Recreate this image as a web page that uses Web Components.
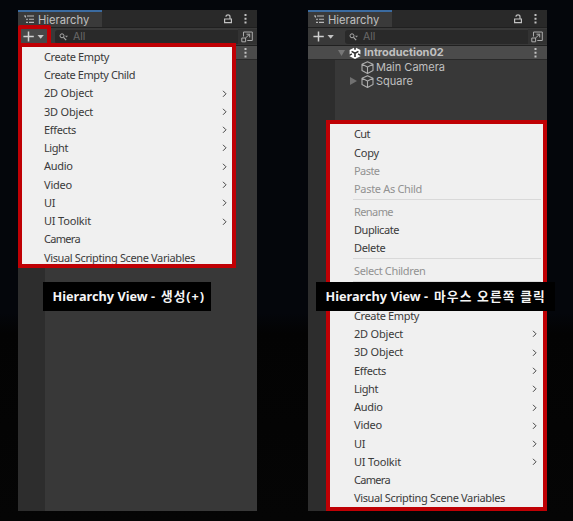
<!DOCTYPE html>
<html lang="ko"><head><meta charset="utf-8"><title>Hierarchy View</title>
<style>
body{margin:0;width:573px;height:521px;overflow:hidden;background:linear-gradient(#04060b 0 60%,#030303 64%,#050505);font-family:"Noto Sans","Noto Sans CJK KR",sans-serif}
main{display:flex;gap:51.5px;padding:10px 0 0 18px}
</style></head><body>
<main>
<hierarchy-panel>
  <menu-box slot="overlay" style="left:0;top:33px;width:218px;height:225px;--pad:22px;--arrow:5.5px;--top:1px">
    <menu-row w="65">Create Empty</menu-row><menu-row w="91">Create Empty Child</menu-row>
    <menu-row w="49" sub>2D Object</menu-row><menu-row w="49" sub>3D Object</menu-row><menu-row w="32" sub>Effects</menu-row><menu-row w="24" sub>Light</menu-row><menu-row w="28.5" sub>Audio</menu-row><menu-row w="28" sub>Video</menu-row><menu-row w="11" sub>UI</menu-row><menu-row w="47" sub>UI Toolkit</menu-row><menu-row w="36">Camera</menu-row><menu-row w="151">Visual Scripting Scene Variables</menu-row>
  </menu-box>
  <focus-frame slot="overlay"></focus-frame>
  <caption-bar slot="overlay" style="left:25px;width:167.5px"><fit-text w="102.5">Hierarchy View -</fit-text><fit-text w="44">생성(+)</fit-text></caption-bar>
</hierarchy-panel>
<hierarchy-panel tree>
  <menu-box slot="overlay" style="left:18px;top:110px;width:220.5px;height:390.5px;--pad:24px;--arrow:6px;--top:1.5px">
    <menu-row w="16">Cut</menu-row><menu-row w="25">Copy</menu-row><menu-row w="25.5" off>Paste</menu-row><menu-row w="68" off>Paste As Child</menu-row><menu-line></menu-line>
    <menu-row w="39" off>Rename</menu-row><menu-row w="45">Duplicate</menu-row><menu-row w="31.5">Delete</menu-row><menu-line></menu-line>
    <menu-row w="71.5" off>Select Children</menu-row><menu-line></menu-line><menu-row></menu-row><menu-line></menu-line>
    <menu-row w="65">Create Empty</menu-row><menu-row w="49" sub>2D Object</menu-row><menu-row w="49" sub>3D Object</menu-row><menu-row w="32" sub>Effects</menu-row><menu-row w="24" sub>Light</menu-row><menu-row w="28.5" sub>Audio</menu-row><menu-row w="28" sub>Video</menu-row><menu-row w="11" sub>UI</menu-row><menu-row w="47" sub>UI Toolkit</menu-row><menu-row w="36">Camera</menu-row><menu-row w="151">Visual Scripting Scene Variables</menu-row>
  </menu-box>
  <caption-bar slot="overlay" style="left:8px;width:239px"><fit-text w="102.5">Hierarchy View -</fit-text><fit-text w="112">마우스 오른쪽 클릭</fit-text></caption-bar>
</hierarchy-panel>
</main>
<script>
// Spreads the leftover width of a label over its characters.
function fit(el, text, width){
  const n=[...text.trim()].length;
  if(!n||!width) return;
  el.style.letterSpacing='0px';
  el.style.letterSpacing=((width-el.getBoundingClientRect().width)/n)+'px';
}
class Base extends HTMLElement{
  constructor(){super();this.attachShadow({mode:'open'}).innerHTML=this.view()}
  view(){return ''}
}
customElements.define('kebab-dots',class extends Base{view(){return `<style>
:host{display:block;width:3px;height:10px}svg{display:block}</style><svg width="3" height="10"><path d="M.5 0h2v2h-2zM.5 3.8h2v2h-2zM.5 7.6h2v2h-2z" fill="#c2c2c2"/></svg>`}});
const cube='<svg width="13" height="13" viewBox="0 0 13 13" fill="none" stroke="#adadad" stroke-width="1.1" stroke-linejoin="round"><path d="M6.5.7 12 3.3v6.3l-5.5 2.8L1 9.6V3.3zM1 3.3l5.5 2.8L12 3.3M6.5 6.1v6.3"/></svg>';
customElements.define('hierarchy-panel',class extends Base{view(){return `<style>
:host{display:flex;flex-direction:column;position:relative;width:238.5px;height:501px;background:linear-gradient(90deg,#2d2d2d 27px,#383838 27px);font:12px/14px Inter,Roboto,sans-serif;color:#c0c0c0}
svg{display:block;flex:none}
.tabs{height:17px;display:flex;align-items:center;background:#292929;border-bottom:1px solid #202020;padding-right:10px;flex:none}
.tab{box-sizing:border-box;width:84px;height:17px;border-top:2px solid #3b6ba0;background:#3a3a3a;display:flex;align-items:center;gap:4px;padding-left:6px;font-size:11.2px}
.grow{flex:1}
.bar{height:17px;display:flex;align-items:center;background:#393939;border-bottom:1px solid #202020;padding-left:5px;flex:none}
.search{flex:1;height:14px;margin-left:11px;background:#292929;border-radius:3px 0 0 3px;display:flex;align-items:center;gap:5px;padding-left:4px;font-size:10.5px;color:#696969}
.pick{width:19px;height:15px;display:flex;align-items:center;justify-content:center;background:#323232}
.scene{height:13px;background:#4b4b4b;border-bottom:1px solid #292929;display:flex;align-items:center;padding:0 9.5px 0 30px;flex:none;font-weight:700;font-size:11px;letter-spacing:-.03px}
.scene>span{position:relative;top:-1px}
.scene>span,.row>span{white-space:nowrap}
.row{height:14px;display:flex;align-items:center;gap:2.5px;padding-left:52.5px;font-size:11px;letter-spacing:0}
.row svg{position:relative;top:.5px}
.row.kid{padding-left:42px}
.tree{display:none;flex-direction:column;margin-top:-.2px} :host([tree]) .tree{display:flex}
:host(:not([tree])) .hide{visibility:hidden}
</style>
<div class="tabs"><div class="tab"><svg width="10" height="9" viewBox="0 0 10 9"><path d="M0 1h2M3 1h7M2 4.2h2M5 4.2h5M2 7.4h2M5 7.4h5M1.5 1v1.5" stroke="#b9b9b9" stroke-width="1.1"/></svg><span>Hierarchy</span></div><i class="grow"></i>
<svg width="8" height="10" viewBox="0 0 8 10" style="margin-right:12px" fill="none" stroke="#c2c2c2"><path d="M.6 5h6.8v3.7H.6z" stroke-width="1.2"/><path d="M2 2.7C2 .2 6 .2 6 2.7V5" stroke-width="1.2"/></svg><kebab-dots></kebab-dots></div>
<div class="bar"><svg width="21" height="11" viewBox="0 0 21 11"><path d="M5.5.5v10M.4 5.5h10.4" stroke="#cecece" stroke-width="1.5"/><path d="M14.5 4h6.3l-3.1 3.8z" fill="#c4c4c4"/></svg>
<div class="search"><svg width="9" height="8" viewBox="0 0 9 8"><circle cx="3" cy="2.8" r="2" fill="none" stroke="#aaa"/><path d="m4.5 4.3 2.7 2.9" stroke="#aaa" stroke-width="1.2"/><path d="M6 2.8h3L7.5 4.5z" fill="#999"/></svg><span>All</span></div>
<div class="pick"><svg width="12" height="12" viewBox="0 0 12 12" fill="none" stroke="#ababab"><path d="M2.5 5.5V1h8.8v8.5H6.3"/><path d="M.8 7h3.8v3.8H.8z"/><path d="M4.3 7.2 8.5 3.3M5.5 3.2h3.2v3.2"/></svg></div></div>
<div class="scene"><svg class="hide" width="7" height="6"><path d="M0 0h7L3.5 6z" fill="#777"/></svg>
<svg class="hide" width="12" height="12" viewBox="0 0 12 12" style="margin:0 3px 0 4px"><path d="M6 .2 11.4 3v6.2L6 11.9.6 9.2V3z" fill="#fff"/><path d="M6 6.2V10M6 6.2 2.6 4.4M6 6.2l3.4-1.8M6 0v2.8M.3 8.4l2.6-1.5M11.7 8.4 9.1 6.9" stroke="#303030" stroke-width="1.6"/></svg>
<span class="hide">${this.hasAttribute('tree')?'Introduction02':''}</span><i class="grow"></i><kebab-dots></kebab-dots></div>
${this.hasAttribute('tree')?`<div class="tree"><div class="row">${cube}<span>Main Camera</span></div><div class="row kid"><svg width="7" height="8" style="margin-right:1px"><path d="M0 0l7 4-7 4z" fill="#707070"/></svg>${cube}<span>Square</span></div></div>`:''}
<slot name="overlay"></slot>`}});
customElements.define('menu-box',class extends Base{view(){return `<style>
:host{position:absolute;box-sizing:border-box;border:4px solid #bf0004;background:#f0f0f0;display:flex;flex-direction:column;padding-top:var(--top);overflow:hidden}
</style><slot></slot>`}});
customElements.define('menu-line',class extends Base{view(){return `<style>
:host{display:block;flex:none;height:1px;margin:.3px 2px 3px 23px;background:#d9d9d9}</style>`}});
customElements.define('menu-row',class extends Base{view(){return `<style>
:host{flex:none;height:18.27px;display:flex;align-items:center;justify-content:space-between;padding:0 var(--arrow) 0 var(--pad);font:11px/18px "Noto Sans",sans-serif;color:#3a3a3a;white-space:nowrap}
:host([off]){color:#929292} svg{display:none;flex:none} :host([sub]) svg{display:block} span{position:relative;top:-.4px}
</style><span><slot></slot></span><svg width="5" height="8" viewBox="0 0 5 8"><path d="M1 .8 4 3.8 1 6.8" fill="none" stroke="#444" stroke-width="1"/></svg>`}
connectedCallback(){fit(this.shadowRoot.querySelector('span'),this.textContent,+this.getAttribute('w'))}});
customElements.define('focus-frame',class extends Base{view(){return `<style>
:host{position:absolute;left:0;top:14.5px;width:33px;height:22.5px;box-sizing:border-box;border:4px solid #bf0004;border-left-width:3px;border-radius:2px;background:#ffffff14}</style>`}});
customElements.define('caption-bar',class extends Base{view(){return `<style>
:host{position:absolute;top:272px;height:29px;box-sizing:border-box;padding-left:9.5px;background:#000;color:#f5f5f5;font:bold 12.7px/28px "Noto Sans","Noto Sans CJK KR",sans-serif;white-space:nowrap;display:flex;gap:6px}
</style><slot></slot>`}});
customElements.define('fit-text',class extends Base{view(){return `<style>:host{display:block;flex:none}</style><slot></slot>`}
connectedCallback(){fit(this,this.textContent,+this.getAttribute('w'))}});
</script></body></html>
